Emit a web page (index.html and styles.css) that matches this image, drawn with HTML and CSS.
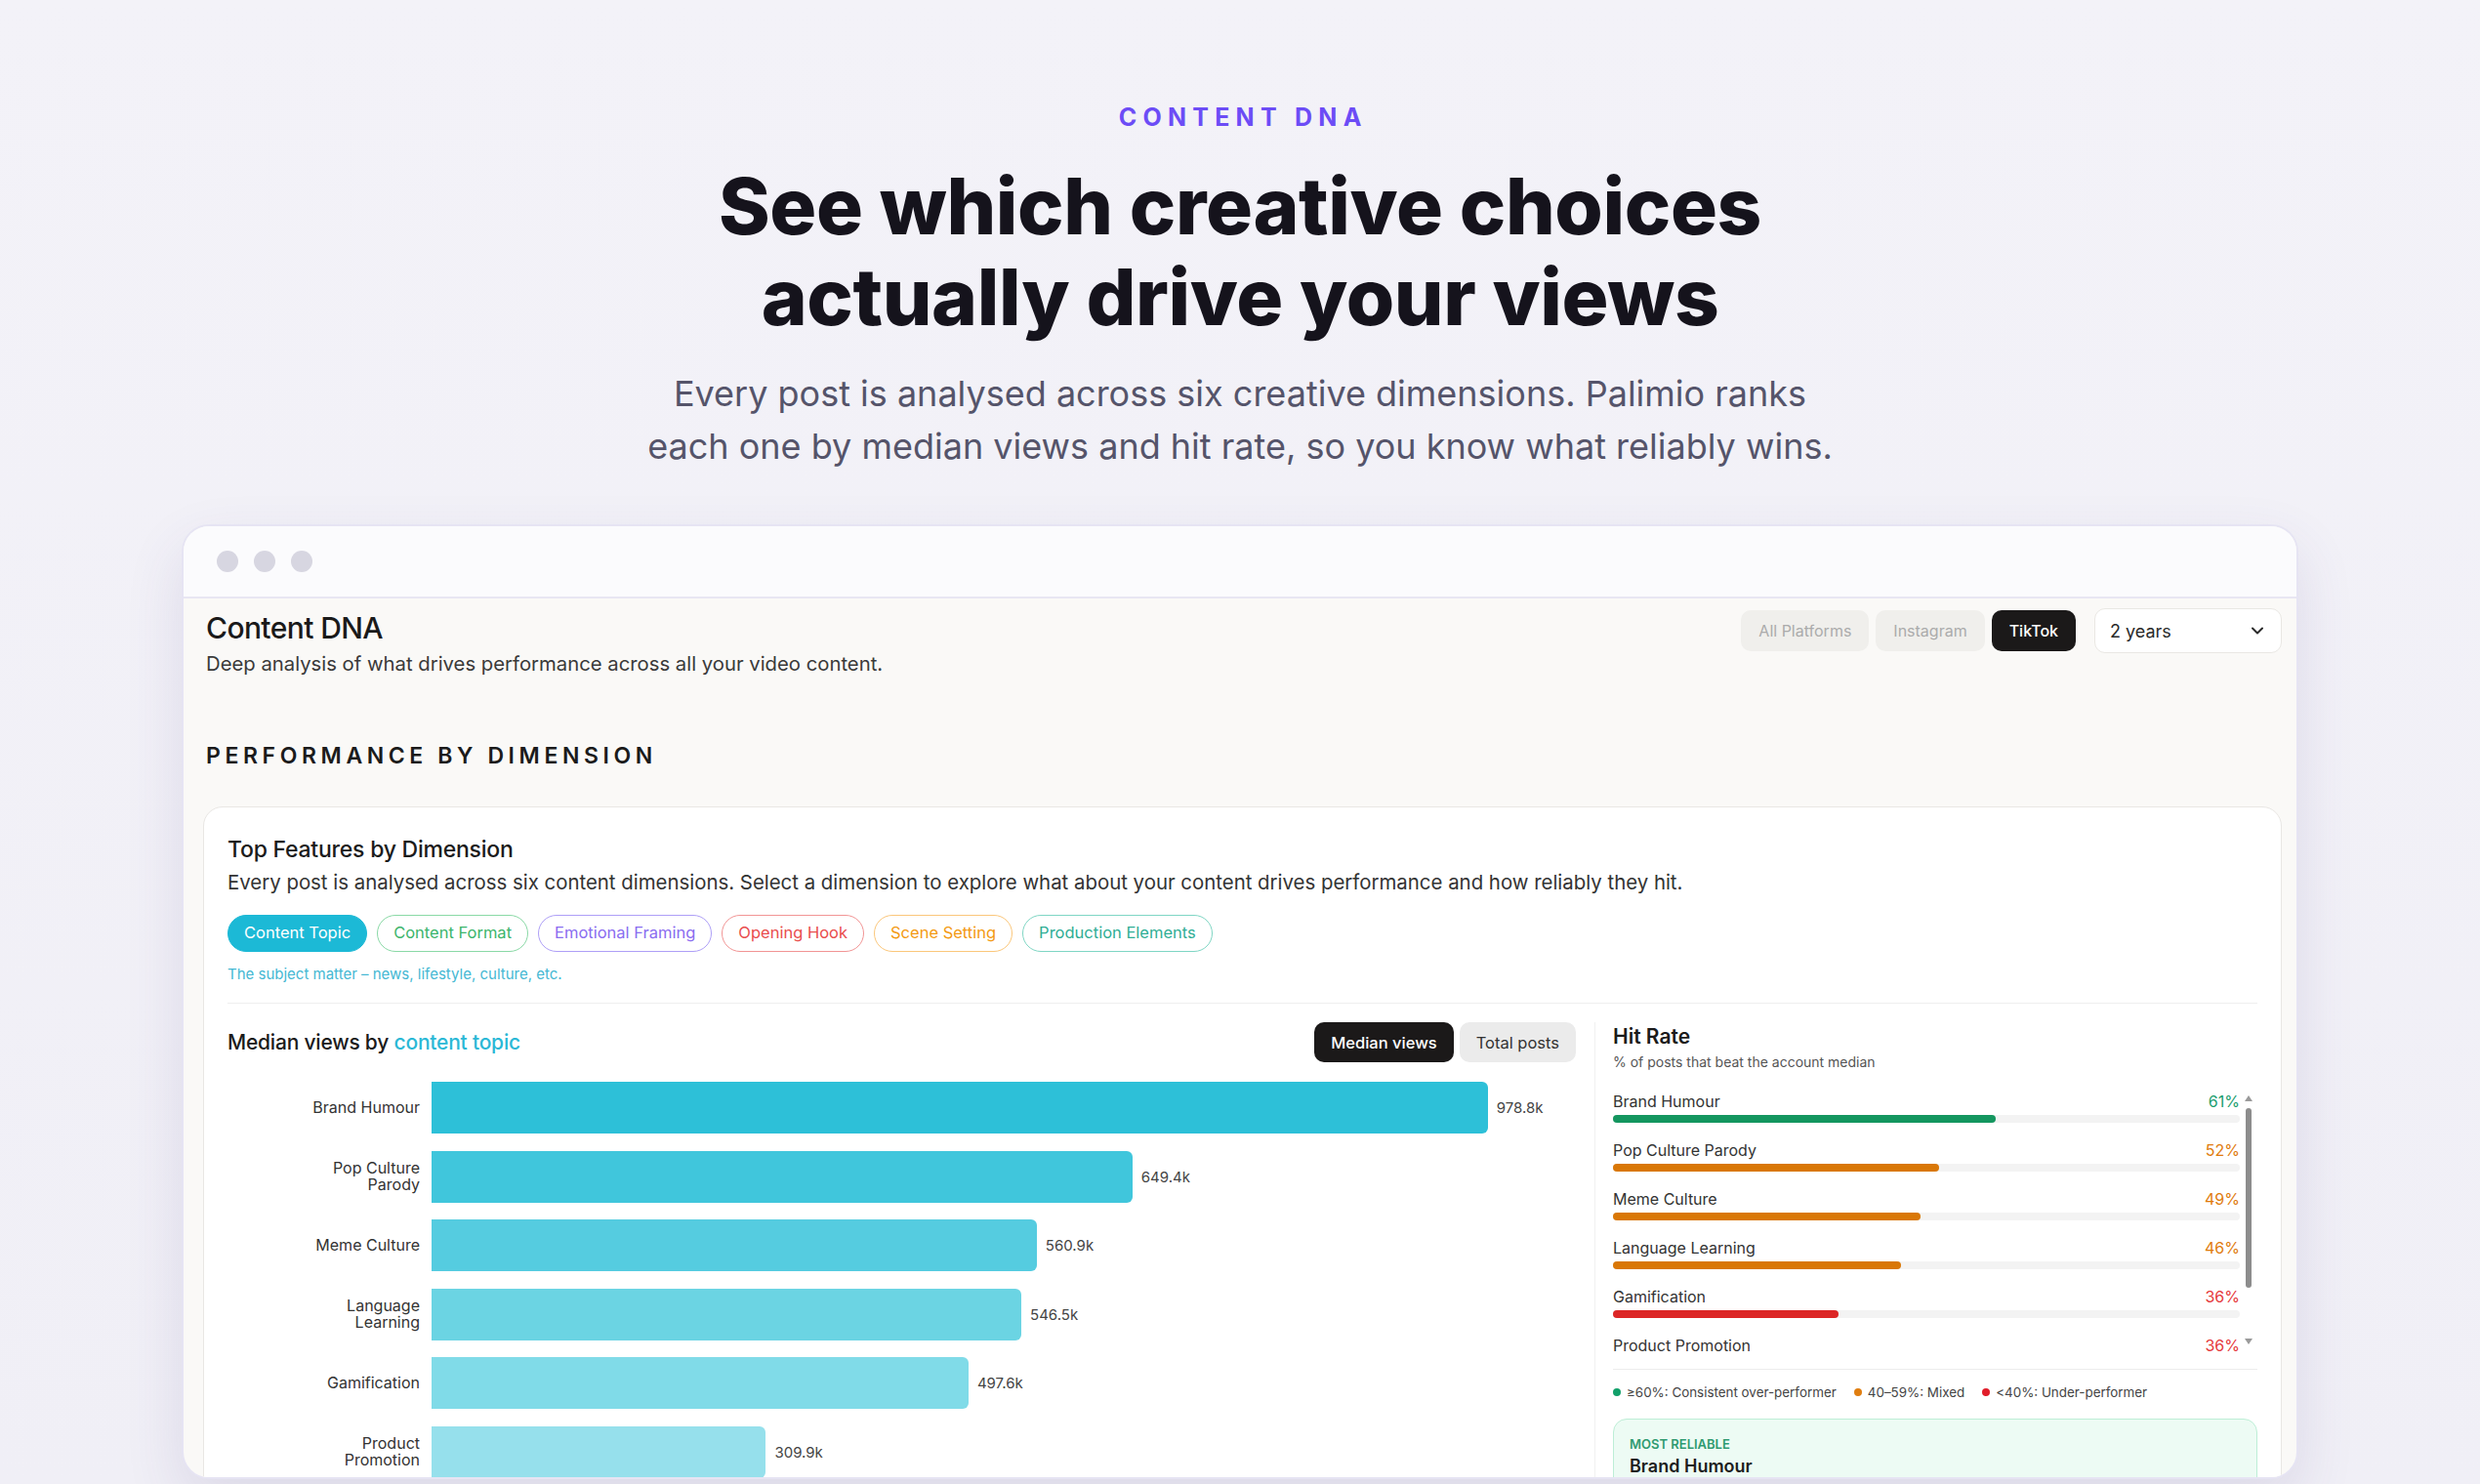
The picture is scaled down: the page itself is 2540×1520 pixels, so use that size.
FILE: index.html
```html
<!DOCTYPE html>
<html lang="en">
<head>
    <meta charset="UTF-8">
    <meta name="viewport" content="width=device-width, initial-scale=1.0">
    <title>Content DNA</title>
    <link rel="stylesheet" href="styles.css">
</head>
<body>
    <section class="hero">
        <p class="eyebrow">CONTENT DNA</p>
        <h1>See which creative choices<br>actually drive your views</h1>
        <p class="lead">Every post is analysed across six creative dimensions. Palimio ranks<br>each one by median views and hit rate, so you know what reliably wins.</p>
    </section>

    <div class="window">
        <div class="titlebar">
            <span class="dot"></span>
            <span class="dot"></span>
            <span class="dot"></span>
        </div>

        <div class="app">
            <header class="app-head">
                <div>
                    <h2>Content DNA</h2>
                    <p>Deep analysis of what drives performance across all your video content.</p>
                </div>
                <div class="controls">
                    <div class="seg">
                        <button>All Platforms</button>
                        <button>Instagram</button>
                        <button class="active">TikTok</button>
                    </div>
                    <div class="select">
                        <span>2 years</span>
                        <svg width="20" height="20" viewBox="0 0 24 24" fill="none" stroke="#2a2a2a" stroke-width="2.4" stroke-linecap="round" stroke-linejoin="round"><polyline points="6 9 12 15 18 9"></polyline></svg>
                    </div>
                </div>
            </header>

            <h3 class="section-title">PERFORMANCE BY DIMENSION</h3>

            <div class="card">
                <h4 class="card-title">Top Features by Dimension</h4>
                <p class="card-desc">Every post is analysed across six content dimensions. Select a dimension to explore what about your content drives performance and how reliably they hit.</p>

                <div class="pills">
                    <span class="pill topic active">Content Topic</span>
                    <span class="pill format">Content Format</span>
                    <span class="pill emotion">Emotional Framing</span>
                    <span class="pill hook">Opening Hook</span>
                    <span class="pill scene">Scene Setting</span>
                    <span class="pill production">Production Elements</span>
                </div>
                <p class="hint">The subject matter – news, lifestyle, culture, etc.</p>

                <div class="lower">
                    <div class="median">
                        <div class="median-head">
                            <span class="median-title">Median views by <em>content topic</em></span>
                            <div class="toggle">
                                <button class="active">Median views</button>
                                <button>Total posts</button>
                            </div>
                        </div>

                        <div class="bars">
                            <div class="bar-row">
                                <span class="bar-label">Brand Humour</span>
                                <div class="bar-track"><div class="bar" style="width: 92.3%"></div><span class="bar-value">978.8k</span></div>
                            </div>
                            <div class="bar-row">
                                <span class="bar-label">Pop Culture Parody</span>
                                <div class="bar-track"><div class="bar" style="width: 61.24%"></div><span class="bar-value">649.4k</span></div>
                            </div>
                            <div class="bar-row">
                                <span class="bar-label">Meme Culture</span>
                                <div class="bar-track"><div class="bar" style="width: 52.89%"></div><span class="bar-value">560.9k</span></div>
                            </div>
                            <div class="bar-row">
                                <span class="bar-label">Language Learning</span>
                                <div class="bar-track"><div class="bar" style="width: 51.54%"></div><span class="bar-value">546.5k</span></div>
                            </div>
                            <div class="bar-row">
                                <span class="bar-label">Gamification</span>
                                <div class="bar-track"><div class="bar" style="width: 46.92%"></div><span class="bar-value">497.6k</span></div>
                            </div>
                            <div class="bar-row">
                                <span class="bar-label">Product Promotion</span>
                                <div class="bar-track"><div class="bar" style="width: 29.22%"></div><span class="bar-value">309.9k</span></div>
                            </div>
                        </div>
                    </div>

                    <div class="hitrate">
                        <h5>Hit Rate</h5>
                        <p class="hit-sub">% of posts that beat the account median</p>

                        <div class="hit-scroll">
                            <div class="hit-list">
                                <div class="hit-row">
                                    <div class="hit-top"><span>Brand Humour</span><span class="pct green">61%</span></div>
                                    <div class="hit-track"><div class="hit-fill green" style="width: 61%"></div></div>
                                </div>
                                <div class="hit-row">
                                    <div class="hit-top"><span>Pop Culture Parody</span><span class="pct orange">52%</span></div>
                                    <div class="hit-track"><div class="hit-fill orange" style="width: 52%"></div></div>
                                </div>
                                <div class="hit-row">
                                    <div class="hit-top"><span>Meme Culture</span><span class="pct orange">49%</span></div>
                                    <div class="hit-track"><div class="hit-fill orange" style="width: 49%"></div></div>
                                </div>
                                <div class="hit-row">
                                    <div class="hit-top"><span>Language Learning</span><span class="pct orange">46%</span></div>
                                    <div class="hit-track"><div class="hit-fill orange" style="width: 46%"></div></div>
                                </div>
                                <div class="hit-row">
                                    <div class="hit-top"><span>Gamification</span><span class="pct red">36%</span></div>
                                    <div class="hit-track"><div class="hit-fill red" style="width: 36%"></div></div>
                                </div>
                                <div class="hit-row">
                                    <div class="hit-top"><span>Product Promotion</span><span class="pct red">36%</span></div>
                                    <div class="hit-track"><div class="hit-fill red" style="width: 36%"></div></div>
                                </div>
                            </div>
                            <div class="scrollbar">
                                <span class="arrow up"></span>
                                <span class="thumb"></span>
                                <span class="arrow down"></span>
                            </div>
                        </div>

                        <div class="legend">
                            <span><i class="green"></i>≥60%: Consistent over-performer</span>
                            <span><i class="orange"></i>40–59%: Mixed</span>
                            <span><i class="red"></i>&lt;40%: Under-performer</span>
                        </div>

                        <div class="reliable">
                            <div class="reliable-label">MOST RELIABLE</div>
                            <div class="reliable-name">Brand Humour</div>
                        </div>
                    </div>
                </div>
            </div>
        </div>
    </div>
</body>
</html>
```

FILE: styles.css
```css
* {
    box-sizing: border-box;
}
body {
    margin: 0;
    height: 1520px;
    overflow: hidden;
    font-family: Inter, "Noto Sans", sans-serif;
    color: #1c1b22;
    background: linear-gradient(180deg, #f3f2f8 0%, #f0eff6 100%);
}

/* hero */
.hero {
    text-align: center;
    padding-top: 105px;
}
.eyebrow {
    margin: 0;
    font-size: 25px;
    line-height: 30px;
    font-weight: 700;
    letter-spacing: 0.25em;
    text-indent: 0.25em;
    color: #6c4cf6;
}
.hero h1 {
    margin: 29px 0 0;
    font-size: 80px;
    line-height: 93px;
    font-weight: 800;
    letter-spacing: -0.005em;
    color: #15131c;
}
.lead {
    margin: 26px 0 0;
    font-size: 36px;
    line-height: 54px;
    color: #55546a;
}

/* browser window */
.window {
    width: 2168px;
    height: 978px;
    margin: 53px auto 0;
    border: 2px solid #e6e4f3;
    border-radius: 28px;
    background: #faf9f7;
    overflow: hidden;
    box-shadow: 0 24px 60px rgba(70, 60, 130, 0.12);
}
.titlebar {
    height: 74px;
    display: flex;
    align-items: center;
    gap: 16px;
    padding-left: 34px;
    background: #fbfbfd;
    border-bottom: 2px solid #e8e6f3;
}
.dot {
    width: 22px;
    height: 22px;
    border-radius: 50%;
    background: #d7d6e1;
}
.app {
    padding: 10px 15px 0 23px;
}
.app-head {
    display: flex;
    justify-content: space-between;
    align-items: flex-start;
}
.app-head h2 {
    margin: 0;
    font-size: 30px;
    line-height: 40px;
    font-weight: 500;
    letter-spacing: -0.02em;
    color: #1a1a1a;
}
.app-head p {
    margin: 3px 0 0;
    font-size: 20.3px;
    line-height: 28px;
    color: #3a3a3a;
}
.controls {
    display: flex;
    align-items: center;
    gap: 19px;
}
.seg {
    display: flex;
    gap: 7px;
}
.seg button {
    height: 42px;
    padding: 0 18px;
    border: none;
    border-radius: 10px;
    background: #f0efec;
    color: #ababab;
    font-family: inherit;
    font-size: 16px;
}
.seg button.active {
    background: #1b1919;
    color: #fff;
    font-weight: 500;
}
.select {
    width: 192px;
    height: 46px;
    display: flex;
    justify-content: space-between;
    align-items: center;
    padding: 0 14px 0 15px;
    background: #fff;
    border: 1px solid #e9e7e3;
    border-radius: 11px;
    font-size: 18px;
    color: #2a2a2a;
}
.section-title {
    margin: 65px 0 0;
    font-size: 23px;
    line-height: 30px;
    font-weight: 600;
    letter-spacing: 0.2em;
    color: #1b1b1b;
}

/* card */
.card {
    margin: 37px 0 0 -3px;
    padding: 28px 24px 0;
    background: #fff;
    border: 1px solid #e9e7e4;
    border-radius: 20px;
}
.card-title {
    margin: 0;
    font-size: 23px;
    line-height: 30px;
    font-weight: 500;
    letter-spacing: -0.01em;
    color: #1b1b1b;
}
.card-desc {
    margin: 5px 0 0;
    font-size: 20.4px;
    line-height: 28px;
    color: #333;
}
.pills {
    display: flex;
    gap: 10px;
    margin-top: 19px;
}
.pill {
    height: 38px;
    padding: 0 16px;
    border: 1.5px solid;
    border-radius: 19px;
    font-size: 16.5px;
    line-height: 35px;
    background: #fff;
}
.pill.topic { border-color: #1cb9d6; background: #1cb9d6; color: #fff; }
.pill.format { border-color: #8ad9a6; color: #3bb56b; }
.pill.emotion { border-color: #ae9ff7; color: #8a6df0; }
.pill.hook { border-color: #f29595; color: #e94d4d; }
.pill.scene { border-color: #fbc77b; color: #f39a12; }
.pill.production { border-color: #7fd6c4; color: #2fae95; }
.hint {
    margin: 12px 0 0;
    font-size: 15px;
    line-height: 22px;
    color: #45b8d3;
}

/* lower split */
.lower {
    display: flex;
    margin-top: 18px;
    padding-top: 19px;
    border-top: 1px solid #efefef;
}
.median {
    width: 1381px;
}
.median-head {
    display: flex;
    justify-content: space-between;
    align-items: center;
    height: 41px;
}
.median-title {
    font-size: 21px;
    font-weight: 500;
    letter-spacing: -0.01em;
    color: #1b1b1b;
}
.median-title em {
    font-style: normal;
    color: #2bb8d6;
}
.toggle {
    display: flex;
    gap: 6px;
}
.toggle button {
    height: 41px;
    padding: 0 17px;
    border: none;
    border-radius: 10px;
    background: #ebebeb;
    color: #333;
    font-family: inherit;
    font-size: 16.5px;
}
.toggle button.active {
    background: #1b1919;
    color: #fff;
    font-weight: 500;
}
.bars {
    margin-top: 20px;
}
.bar-row {
    display: flex;
    align-items: center;
    height: 53px;
    margin-bottom: 17.6px;
}
.bar-label {
    width: 197px;
    padding-left: 78px;
    margin-right: 12px;
    text-align: right;
    font-size: 16px;
    line-height: 17px;
    color: #333;
}
.bar-track {
    flex: 1;
    display: flex;
    align-items: center;
    height: 53px;
}
.bar {
    height: 53px;
    border-radius: 0 6px 6px 0;
}
.bar-row:nth-child(1) .bar { background: #2dc0d8; }
.bar-row:nth-child(2) .bar { background: #40c6dc; }
.bar-row:nth-child(3) .bar { background: #55cce0; }
.bar-row:nth-child(4) .bar { background: #6bd4e3; }
.bar-row:nth-child(5) .bar { background: #80dbe8; }
.bar-row:nth-child(6) .bar { background: #96e0ec; }
.bar-value {
    margin-left: 9px;
    font-size: 15px;
    color: #444;
}

/* hit rate */
.hitrate {
    flex: 1;
    margin-left: 19px;
    padding-left: 18px;
    border-left: 1px solid #f1f1f1;
}
.hitrate h5 {
    margin: 2px 0 0;
    font-size: 21px;
    line-height: 26px;
    font-weight: 600;
    color: #1b1b1b;
}
.hit-sub {
    margin: 4px 0 0;
    font-size: 14px;
    line-height: 18px;
    color: #555;
}
.hit-scroll {
    display: flex;
    height: 274px;
    margin-top: 21px;
    overflow: hidden;
}
.hit-list {
    flex: 1;
}
.hit-row {
    margin-bottom: 18px;
}
.hit-top {
    display: flex;
    justify-content: space-between;
    font-size: 16px;
    line-height: 20px;
    color: #333;
}
.hit-track {
    height: 8px;
    margin-top: 4px;
    border-radius: 4px;
    background: #f3f3f3;
}
.hit-fill {
    height: 8px;
    border-radius: 4px;
}
.pct.green { color: #1a9d6e; }
.pct.orange { color: #e07b0c; }
.pct.red { color: #e5383b; }
.hit-fill.green { background: #14965f; }
.hit-fill.orange { background: #d97706; }
.hit-fill.red { background: #dc2626; }
.scrollbar {
    width: 18px;
    display: flex;
    flex-direction: column;
    align-items: center;
    padding-top: 4px;
}
.arrow {
    width: 0;
    height: 0;
    border-left: 4px solid transparent;
    border-right: 4px solid transparent;
}
.arrow.up {
    border-bottom: 6px solid #9a9a9a;
}
.arrow.down {
    margin-top: 52px;
    border-top: 6px solid #9a9a9a;
}
.thumb {
    width: 6px;
    height: 184px;
    margin-top: 7px;
    border-radius: 3px;
    background: #8d8d8d;
}
.legend {
    display: flex;
    gap: 18px;
    margin-top: 10px;
    padding-top: 14px;
    border-top: 1px solid #ececec;
    font-size: 13.4px;
    line-height: 18px;
    color: #444;
}
.legend i {
    display: inline-block;
    width: 8px;
    height: 8px;
    margin-right: 6px;
    border-radius: 50%;
    vertical-align: 1px;
}
.legend i.green { background: #12a06a; }
.legend i.orange { background: #e07e10; }
.legend i.red { background: #e11d2a; }
.reliable {
    margin-top: 18px;
    padding: 16px 16px 20px;
    background: #edfbf4;
    border: 1px solid #bdeed6;
    border-radius: 14px;
}
.reliable-label {
    font-size: 13px;
    line-height: 18px;
    font-weight: 600;
    color: #2f9a70;
}
.reliable-name {
    margin-top: 2px;
    font-size: 18px;
    line-height: 24px;
    font-weight: 600;
    color: #1d1d1d;
}
```
